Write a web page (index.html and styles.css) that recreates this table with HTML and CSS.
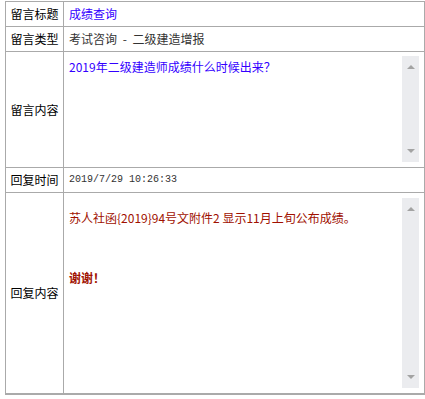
FILE: index.html
```html
<!DOCTYPE html>
<html lang="zh-CN">
<head>
<meta charset="utf-8">
<link rel="stylesheet" href="styles.css">
</head>
<body>
<div class="grid">
  <div class="label">留言标题</div>
  <div class="value title">成绩查询</div>

  <div class="label">留言类型</div>
  <div class="value type">考试咨询 - 二级建造增报</div>

  <div class="label tall">留言内容</div>
  <div class="value box-cell">
    <div class="box box-q">
      <div class="box-text q-text">2019年二级建造师成绩什么时候出来？</div>
      <div class="sbar"><span class="arr up"></span><span class="arr down"></span></div>
    </div>
  </div>

  <div class="label">回复时间</div>
  <div class="value date">2019/7/29 10:26:33</div>

  <div class="label last">回复内容</div>
  <div class="value box-cell last">
    <div class="box box-r">
      <div class="box-text r-text">
        <div class="line">苏人社函{2019}94号文附件2 显示11月上旬公布成绩。</div>
        <div class="line">&nbsp;</div>
        <div class="line">&nbsp;</div>
        <div class="line thanks">谢谢！</div>
      </div>
      <div class="sbar"><span class="arr up"></span><span class="arr down"></span></div>
    </div>
  </div>
</div>
</body>
</html>
```
FILE: styles.css
```css
html, body {
  margin: 0;
  padding: 0;
  background: #fff;
}
body {
  font-family: "Noto Sans CJK SC", "Noto Sans", sans-serif;
  font-size: 12px;
  color: #000;
}
.grid {
  display: grid;
  grid-template-columns: 58px 361px;
  grid-template-rows: 25px 25px 116px 25px 202px;
  margin: 1px 0 0 5px;
  width: 419px;
  border-left: 1px solid #aaaaaa;
  border-top: 1px solid #aaaaaa;
}
.label, .value {
  border-right: 1px solid #aaaaaa;
  border-bottom: 1px solid #aaaaaa;
  display: flex;
  align-items: center;
  line-height: 16px;
}
.label.last, .value.last {
  border-bottom-width: 2px;
}
.label {
  justify-content: center;
  color: #000;
}
.value {
  padding: 0 4px 0 5px;
}
.title { color: #3300ff; }
.type {
  color: #333333;
  word-spacing: 3px;
}
.date {
  font-family: "Liberation Mono", "DejaVu Sans Mono", monospace;
  font-size: 10px;
  color: #333333;
}
.box-cell {
  padding: 4px 4px 0 4px;
  align-items: flex-start;
}
.box {
  display: flex;
  width: 351px;
  background: #fff;
}
.box-q { height: 106px; }
.box-r { height: 190px; margin-top: 1px; }
.box-text {
  flex: 1;
  padding: 2px 1px;
}
.q-text {
  color: #3300ff;
  line-height: 17px;
}
.r-text {
  color: #a01000;
  line-height: 20px;
  padding-top: 10px;
}
.thanks { font-weight: bold; }
.sbar {
  width: 17px;
  background: #ebecef;
  display: flex;
  flex-direction: column;
  justify-content: space-between;
  align-items: center;
  padding: 9px 0;
  box-sizing: border-box;
}
.arr {
  width: 0;
  height: 0;
  border-left: 4px solid transparent;
  border-right: 4px solid transparent;
}
.arr.up { border-bottom: 4px solid #a3a3a3; }
.arr.down { border-top: 4px solid #a3a3a3; }
```
